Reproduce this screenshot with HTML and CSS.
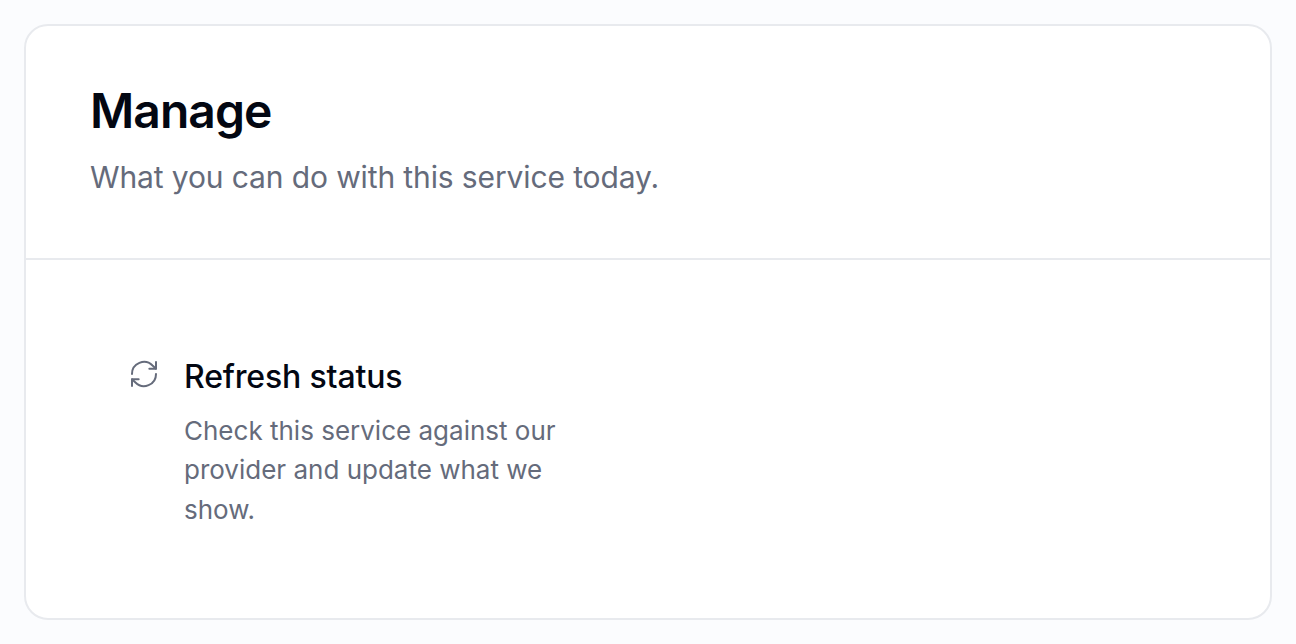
FILE: index.html
```html
<!DOCTYPE html>
<html>
<head>
    <meta charset="UTF-8">
    <link rel="stylesheet" href="styles.css">
</head>
<body>
<div class="card">
    <div class="card-header">
        <h1>Manage</h1>
        <p>What you can do with this service today.</p>
    </div>
    <div class="card-body">
        <div class="action">
            <svg class="action-icon" viewBox="0 0 24 24" fill="none" stroke="currentColor" stroke-width="1.5" stroke-linecap="round" stroke-linejoin="round">
                <path d="M3 12a9 9 0 0 1 15.4-6.4L21 8"/>
                <path d="M21 3v5h-5"/>
                <path d="M21 12a9 9 0 0 1-15.4 6.4L3 16"/>
                <path d="M8 16H3v5"/>
            </svg>
            <div class="action-text">
                <h2>Refresh status</h2>
                <p>Check this service against our provider and update what we show.</p>
            </div>
        </div>
    </div>
</div>
</body>
</html>
```

FILE: styles.css
```css
* {
    margin: 0;
    padding: 0;
    box-sizing: border-box;
    font-family: 'Inter', sans-serif;
}

body {
    background: #fbfcfe;
    padding: 24px;
    height: 644px;
    overflow: hidden;
}

.card {
    height: 596px;
    background: #fff;
    border: 2px solid #e8eaee;
    border-radius: 24px;
}

.card-header {
    height: 234px;
    padding: 56px 64px 0;
    border-bottom: 2px solid #e8eaee;
}

.card-header h1 {
    font-size: 48px;
    line-height: 58px;
    font-weight: 600;
    letter-spacing: -0.96px;
    color: #030712;
}

.card-header p {
    margin-top: 17px;
    font-size: 30px;
    line-height: 40px;
    letter-spacing: -0.12px;
    color: #656b7b;
}

.card-body {
    padding: 97px 102px;
}

.action {
    display: flex;
    gap: 24px;
}

.action-icon {
    width: 32px;
    height: 32px;
    margin-top: 1px;
    color: #656b7b;
    flex-shrink: 0;
}

.action-text {
    width: 400px;
}

.action-text h2 {
    font-size: 32px;
    line-height: 36px;
    font-weight: 500;
    letter-spacing: -0.16px;
    margin-top: 2px;
    color: #030712;
}

.action-text p {
    margin-top: 16px;
    font-size: 26px;
    line-height: 39.4px;
    color: #656b7b;
}
```
